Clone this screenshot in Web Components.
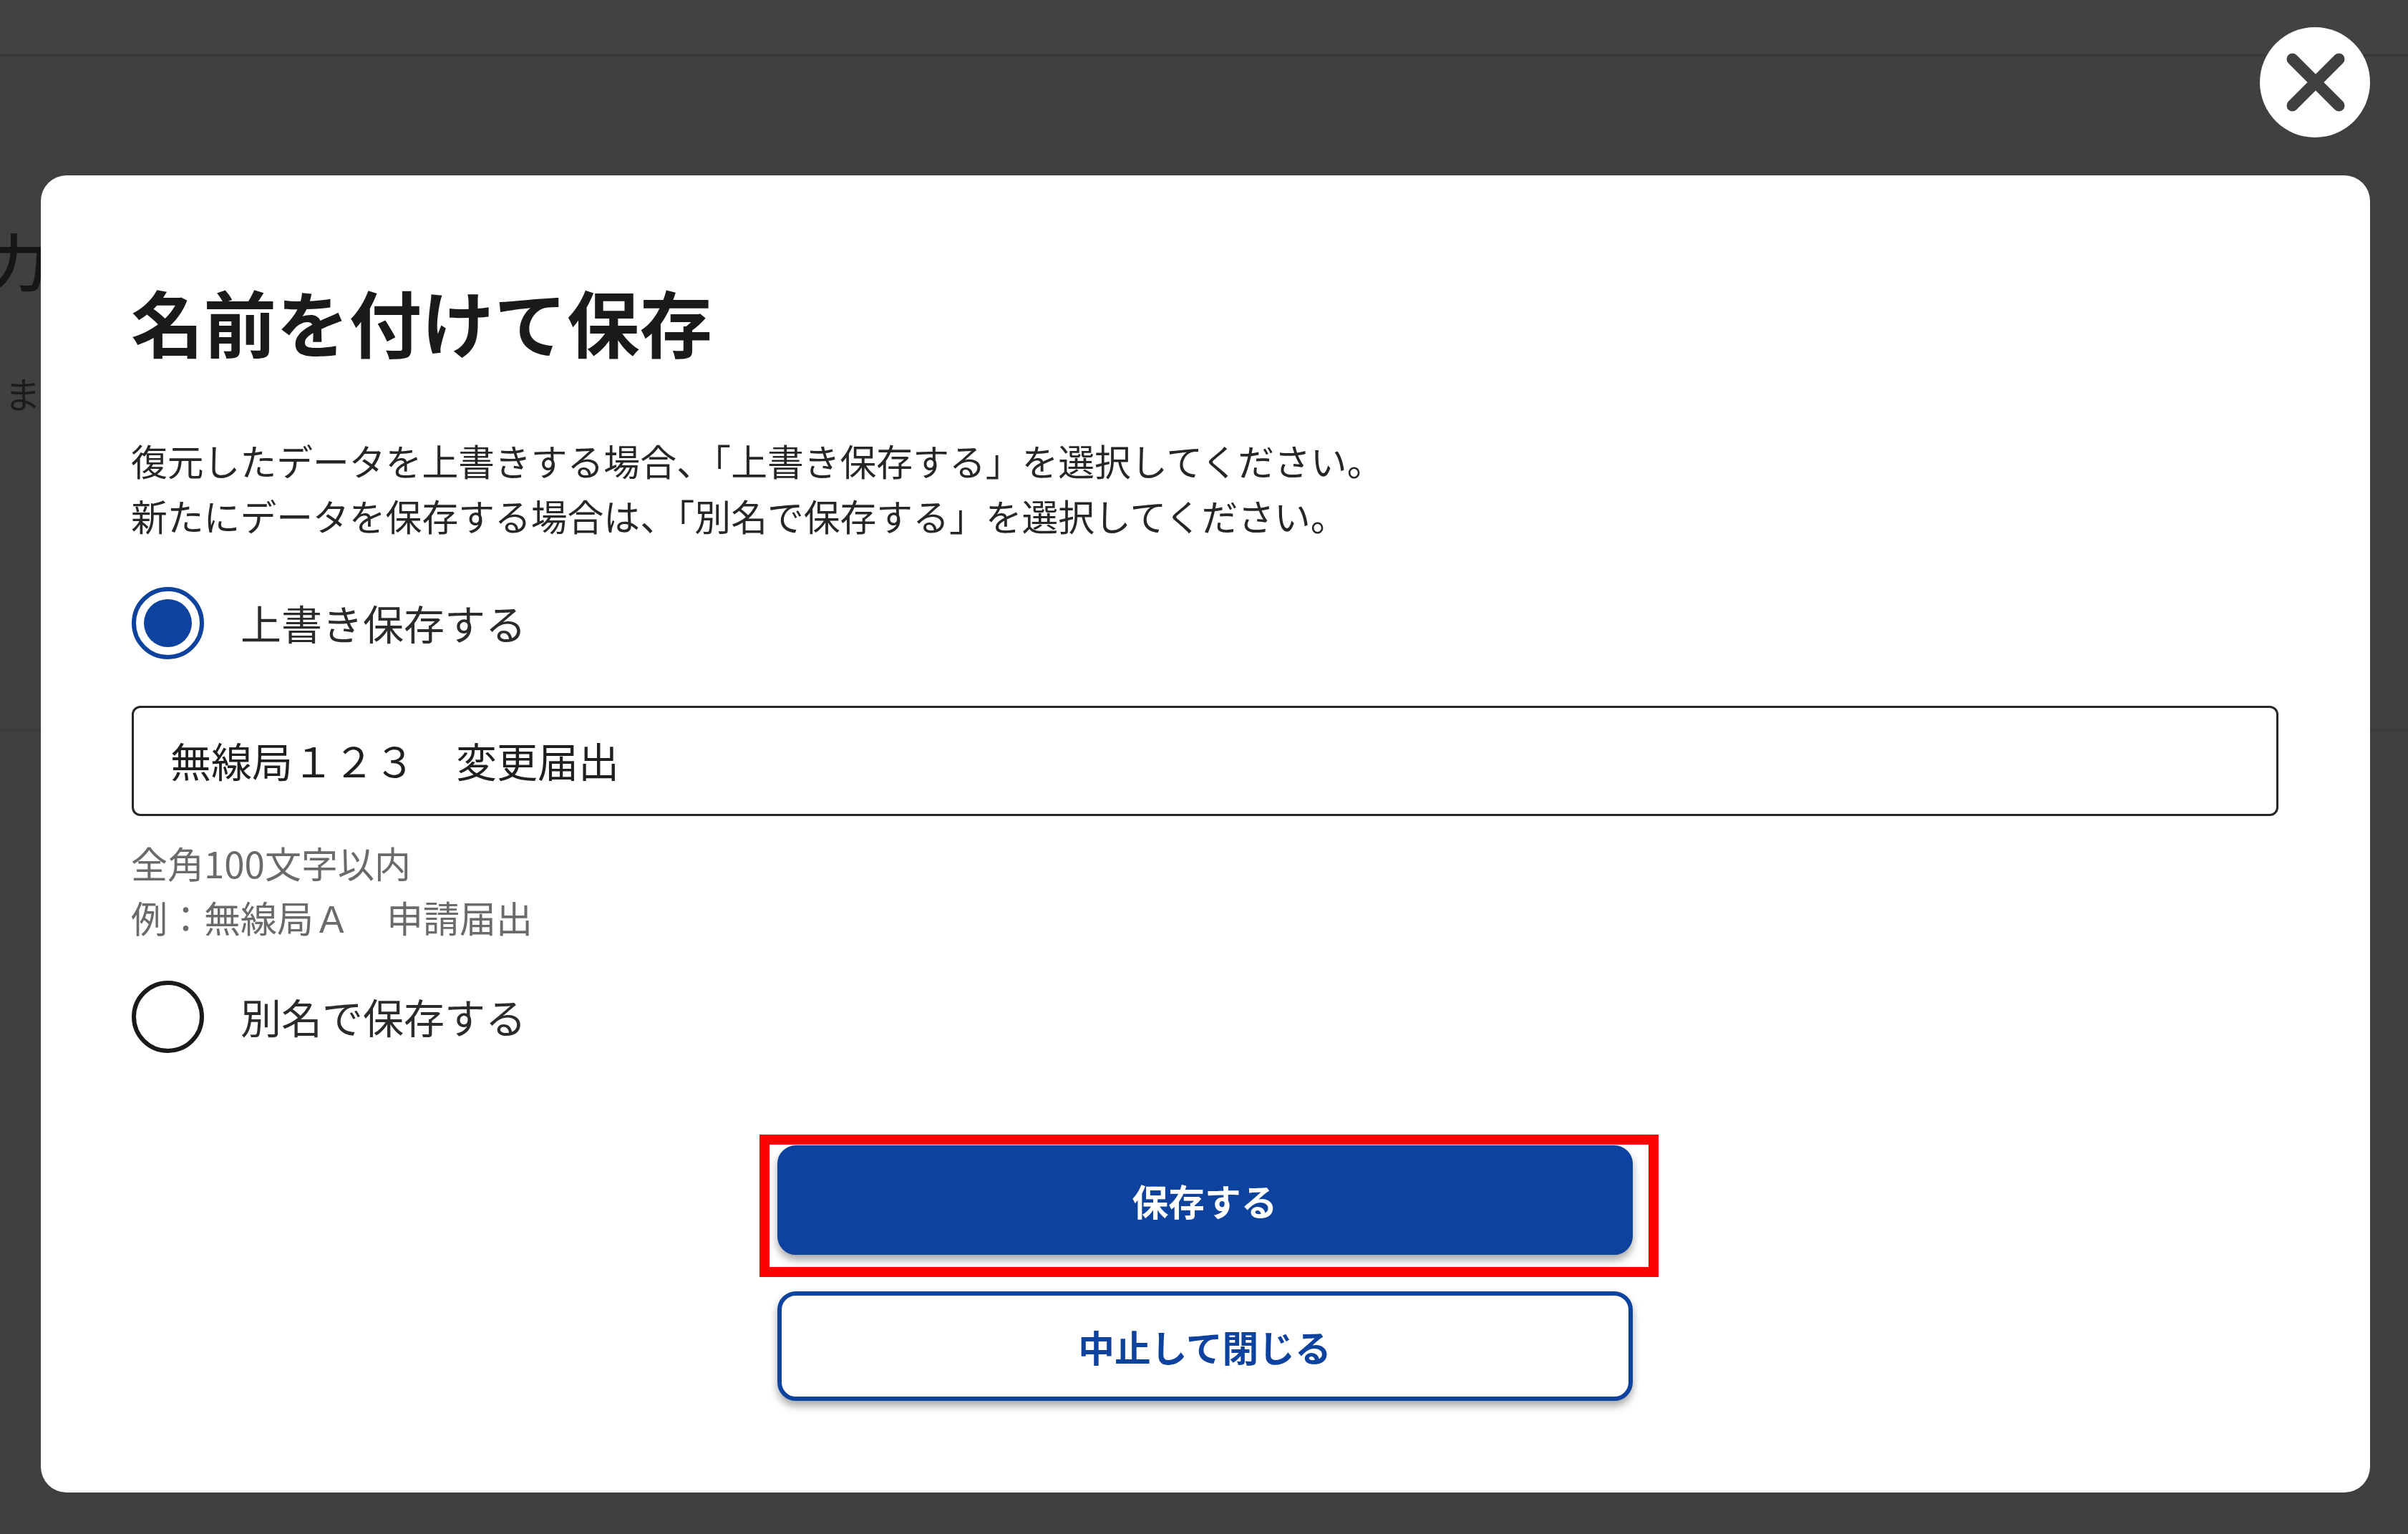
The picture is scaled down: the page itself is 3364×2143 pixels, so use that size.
<!DOCTYPE html>
<html lang="ja">
<head>
<meta charset="utf-8">
<title>名前を付けて保存</title>
<style>
html,body{margin:0;padding:0;background:#404040;}
body{width:3364px;height:2143px;overflow:hidden;position:relative;font-family:"Noto Sans CJK JP","Noto Sans",sans-serif;}
</style>
</head>
<body>
<back-page></back-page>
<save-dialog>
    <radio-field checked>上書き保存する</radio-field>
    <text-field hint="全角100文字以内|例&#xFF1A;無線局&#xFF21;&#x3000;申請届出">無線局&#xFF11;&#xFF12;&#xFF13;&#x3000;変更届出</text-field>
    <radio-field>別名で保存する</radio-field>
    <action-button slot="actions" kind="primary" marked>保存する</action-button>
    <action-button slot="actions" kind="secondary">中止して閉じる</action-button>
</save-dialog>
<script>
// dimmed page behind the dialog
class backPage extends HTMLElement{
    constructor(){
        super();
        this.attachShadow({ mode: "open" });
        this.shadowRoot.innerHTML = `
        <style>
        :host{
            display:flex;
            flex-direction:column;
            width:3364px;
            height:2143px;
            background:#404040;
            overflow:hidden;
            font-family:"Noto Sans CJK JP","Noto Sans",sans-serif;
            color:#161616;
        }
        header{
            height:76px;
            background:#424242;
            border-bottom:3px solid #393939;
            box-shadow:0 3px 6px rgba(0,0,0,.12);
        }
        nav{
            height:96px;
            background:#404040;
            border-bottom:2px solid #3c3c3c;
        }
        main{
            height:840px;
            background:#404040;
            border-bottom:3px solid #3b3b3b;
            overflow:hidden;
            padding-top:1px;
        }
        h1{
            margin:129px 0 0 -20px;
            font-size:88px;
            line-height:110px;
            font-weight:500;
        }
        p{
            margin:94px 0 0 6px;
            font-size:51px;
            line-height:77px;
            color:#1c1c1c;
        }
        .resto{
            flex:1;
            background:#404040;
        }
        </style>
        <header></header>
        <nav></nav>
        <main>
            <h1>力</h1>
            <p>ま</p>
        </main>
        <div class="resto"></div>
        `
    }
}

class saveDialog extends HTMLElement{
    constructor(){
        super();
        this.attachShadow({ mode: "open" });
        this.shadowRoot.innerHTML = `
        <style>
        :host{
            display:block;
            position:absolute;
            left:57px;
            top:245px;
            width:3254px;
            height:1840px;
            box-sizing:border-box;
            padding:148px 128px 0 126px;
            background:white;
            border-radius:36px;
            font-family:"Noto Sans CJK JP","Noto Sans",sans-serif;
            color:#262626;
        }
        h2{
            margin:0;
            font-size:101.500px;
            line-height:110px;
            font-weight:700;
            color:#1a1a1a;
        }
        p{
            margin:102px 0 0 0;
            font-size:50.8px;
            line-height:77px;
        }
        .opciones{
            display:flex;
            flex-direction:column;
            margin-top:61px;
        }
        .botones{
            display:flex;
            flex-direction:column;
            align-items:center;
            gap:51px;
            margin-top:129px;
        }
        .cerrar{
            position:absolute;
            right:0;
            top:-207px;
            width:154px;
            height:154px;
            border:none;
            padding:0;
            border-radius:50%;
            background:white;
            display:flex;
            align-items:center;
            justify-content:center;
        }
        </style>
        <button class="cerrar" aria-label="閉じる">
            <svg width="154" height="154" viewBox="0 0 154 154">
                <path d="M45.500 44.500L110.500 109.500M110.500 44.500L45.500 109.500" fill="none" stroke="#404040" stroke-width="16" stroke-linecap="round"/>
            </svg>
        </button>
        <h2>名前を付けて保存</h2>
        <p>復元したデータを上書きする場合、「上書き保存する」を選択してください。<br>新たにデータを保存する場合は、「別名で保存する」を選択してください。</p>
        <div class="opciones"><slot></slot></div>
        <div class="botones"><slot name="actions"></slot></div>
        `
    }
}

class radioField extends HTMLElement{
    constructor(){
        super();
        this.attachShadow({ mode: "open" });
        this.shadowRoot.innerHTML = `
        <style>
        :host{
            display:flex;
            align-items:center;
            gap:51px;
            height:101px;
            font-size:57px;
            color:#2b2b2b;
        }
        .circulo{
            width:101px;
            height:101px;
            margin-left:1px;
            box-sizing:border-box;
            border:6px solid #1a1a1a;
            border-radius:50%;
            display:flex;
            align-items:center;
            justify-content:center;
            flex:none;
        }
        :host([checked]) .circulo{
            border-color:#0d439f;
        }
        :host([checked]) .circulo::after{
            content:"";
            width:67px;
            height:67px;
            border-radius:50%;
            background:#0d439f;
        }
        .texto{
            margin-top:-4px;
        }
        </style>
        <div class="circulo"></div>
        <div class="texto"><slot></slot></div>
        `
    }
}

class textField extends HTMLElement{
    constructor(){
        super();
        this.attachShadow({ mode: "open" });
        this.shadowRoot.innerHTML = `
        <style>
        :host{
            display:block;
            margin:65px 0 51px 0;
        }
        .caja{
            height:154px;
            margin-left:1px;
            box-sizing:border-box;
            border:3px solid #262626;
            border-radius:12px;
            padding:0 51px 4px 51px;
            display:flex;
            align-items:center;
            font-size:57px;
            color:#1f1f1f;
        }
        .ayuda{
            margin-top:27px;
            font-size:51px;
            line-height:76px;
            color:#6a6a6a;
        }
        .ayuda div{
            height:76px;
        }
        </style>
        <div class="caja"><slot></slot></div>
        <div class="ayuda"></div>
        `
    }
    connectedCallback(){
        this._ayuda = this.shadowRoot.querySelector(".ayuda");
        this.getAttribute("hint").split("|").forEach(linea=>{
            let fila = document.createElement("div");
            fila.textContent = linea;
            this._ayuda.appendChild(fila);
        })
    }
}

class actionButton extends HTMLElement{
    constructor(){
        super();
        this.attachShadow({ mode: "open" });
        this.shadowRoot.innerHTML = `
        <style>
        :host{
            display:block;
            position:relative;
            width:1195px;
        }
        button{
            display:block;
            width:100%;
            height:153px;
            box-sizing:border-box;
            border:6px solid #0d439f;
            border-radius:26px;
            background:#0d439f;
            color:white;
            font-family:inherit;
            font-size:50.7px;
            font-weight:700;
            padding:0;
            box-shadow:0 7px 12px rgba(0,0,0,.35);
        }
        :host([kind="secondary"]) button{
            background:white;
            color:#0d439f;
        }
        .marca{
            display:none;
            position:absolute;
            left:-25px;
            top:-15px;
            right:-36px;
            bottom:-31px;
            border:14px solid #ff0000;
        }
        :host([marked]) .marca{
            display:block;
        }
        </style>
        <button><slot></slot></button>
        <div class="marca"></div>
        `
    }
}

customElements.define("back-page", backPage)
customElements.define("save-dialog", saveDialog)
customElements.define("radio-field", radioField)
customElements.define("text-field", textField)
customElements.define("action-button", actionButton)
</script>
</body>
</html>
